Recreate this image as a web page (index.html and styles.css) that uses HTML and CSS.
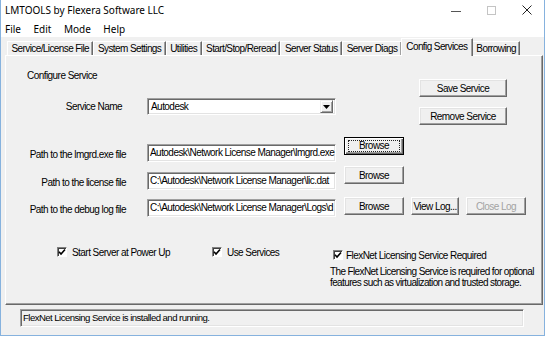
FILE: index.html
```html
<!DOCTYPE html>
<html lang="en">
<head>
    <meta charset="UTF-8">
    <title>LMTOOLS by Flexera Software LLC</title>
    <link rel="stylesheet" href="styles.css">
</head>
<body>
    <div class="window">
        <div class="titlebar">
            <span class="title">LMTOOLS by Flexera Software LLC</span>
            <div class="caption">
                <span class="cap-btn cap-min"></span>
                <span class="cap-btn cap-max"></span>
                <span class="cap-btn cap-close">
                    <svg width="10" height="10" viewBox="0 0 10 10"><path d="M0.5 0.5 L9.5 9.5 M9.5 0.5 L0.5 9.5" stroke="#222" stroke-width="1"/></svg>
                </span>
            </div>
        </div>
        <div class="menubar">
            <span>File</span>
            <span>Edit</span>
            <span>Mode</span>
            <span>Help</span>
        </div>

        <div class="client">
            <div class="tabs">
                <div class="tab">Service/License File</div>
                <div class="tab">System Settings</div>
                <div class="tab">Utilities</div>
                <div class="tab">Start/Stop/Reread</div>
                <div class="tab">Server Status</div>
                <div class="tab">Server Diags</div>
                <div class="tab active">Config Services</div>
                <div class="tab">Borrowing</div>
            </div>

            <div class="panel">
                <div class="config">
                    <div class="config-left">
                        <div class="section-title">Configure Service</div>
                        <div class="service-row">
                            <span class="label label-service">Service Name</span>
                            <div class="select">
                                <span class="select-text">Autodesk</span>
                                <span class="drop">
                                    <svg width="7" height="4" viewBox="0 0 7 4"><path d="M0 0 H7 L3.5 4 Z" fill="#000"/></svg>
                                </span>
                            </div>
                        </div>
                    </div>
                    <div class="config-buttons">
                        <button class="btn btn-wide">Save Service</button>
                        <button class="btn btn-wide">Remove Service</button>
                    </div>
                </div>

                <div class="paths">
                    <div class="path-row row-lmgrd">
                        <div class="path-field">
                            <span class="label">Path to the lmgrd.exe file</span>
                            <div class="textbox">Autodesk\Network License Manager\lmgrd.exe</div>
                        </div>
                        <button class="btn btn-browse focused"><span class="focus-ring">Browse</span></button>
                    </div>
                    <div class="path-row row-license">
                        <div class="path-field">
                            <span class="label">Path to the license file</span>
                            <div class="textbox">C:\Autodesk\Network License Manager\lic.dat</div>
                        </div>
                        <button class="btn btn-browse">Browse</button>
                    </div>
                    <div class="path-row row-debug">
                        <div class="path-field">
                            <span class="label">Path to the debug log file</span>
                            <div class="textbox">C:\Autodesk\Network License Manager\Logs\d</div>
                        </div>
                        <div class="log-buttons">
                            <button class="btn btn-browse">Browse</button>
                            <button class="btn btn-view">View Log...</button>
                            <button class="btn btn-browse" disabled>Close Log</button>
                        </div>
                    </div>
                </div>

                <div class="options">
                    <label class="check">
                        <span class="box"><svg width="8" height="8" viewBox="0 0 8 8"><path d="M1 3.8 L3 6 L7 1.5" fill="none" stroke="#000" stroke-width="1.6"/></svg></span>
                        Start Server at Power Up
                    </label>
                    <label class="check">
                        <span class="box"><svg width="8" height="8" viewBox="0 0 8 8"><path d="M1 3.8 L3 6 L7 1.5" fill="none" stroke="#000" stroke-width="1.6"/></svg></span>
                        Use Services
                    </label>
                    <div class="flexnet">
                        <label class="check check-tight">
                            <span class="box"><svg width="8" height="8" viewBox="0 0 8 8"><path d="M1 3.8 L3 6 L7 1.5" fill="none" stroke="#000" stroke-width="1.6"/></svg></span>
                            FlexNet Licensing Service Required
                        </label>
                        <p class="note">The FlexNet Licensing Service is required for optional<br>features such as virtualization and trusted storage.</p>
                    </div>
                </div>
            </div>

            <div class="status-field">FlexNet Licensing Service is installed and running.</div>
        </div>
    </div>
</body>
</html>
```

FILE: styles.css
```css
body {
    margin: 0;
    padding: 0;
    background: #ffffff;
    font-family: "Liberation Sans", Arial, sans-serif;
}

.window {
    width: 545px;
    height: 336px;
    box-sizing: border-box;
    border: 1px solid #86b2de;
    border-top: none;
    background: #f0f0f0;
    display: flex;
    flex-direction: column;
}

/* title + menu */
.titlebar {
    height: 20px;
    background: #ffffff;
    display: flex;
    align-items: center;
    padding: 0 12px 0 4px;
}

.title,
.menubar span {
    font-family: "Noto Sans", sans-serif;
    font-size: 10px;
    color: #000;
}

.caption {
    margin-left: auto;
    display: flex;
    align-items: center;
    gap: 26px;
}

.cap-btn {
    width: 10px;
    height: 10px;
    display: flex;
    align-items: center;
    justify-content: center;
}

.cap-min::before {
    content: "";
    width: 10px;
    height: 1px;
    background: #555;
    margin-top: 2px;
}

.cap-max {
    box-sizing: border-box;
    border: 1px solid #c4c4c4;
    width: 9px;
    height: 9px;
}

.menubar {
    height: 17px;
    background: #ffffff;
    display: flex;
    align-items: center;
    gap: 12.5px;
    padding-left: 4px;
}

/* client area */
.client {
    flex: 1;
    padding: 1px 1px 0 4px;
    font-size: 10px;
    letter-spacing: -0.55px;
    color: #000;
}

.tabs {
    display: flex;
    align-items: flex-end;
    height: 17px;
    padding-left: 2px;
}

.tab {
    height: 14px;
    box-sizing: border-box;
    padding: 0 3.5px;
    line-height: 14px;
    letter-spacing: -0.6px;
    border-top: 1px solid #ffffff;
    border-left: 1px solid #ffffff;
    border-right: 1px solid #696969;
    box-shadow: inset -1px 0 0 #a0a0a0;
    white-space: nowrap;
}

.tab.active {
    height: 18px;
    line-height: 15px;
    margin: 0 -1px -1px -1px;
    padding: 0 4.5px;
    position: relative;
    z-index: 1;
    background: #f0f0f0;
}

.panel {
    height: 250px;
    box-sizing: border-box;
    border: 1px solid;
    border-color: #ffffff #696969 #696969 #ffffff;
    box-shadow: inset -1px -1px 0 #a0a0a0;
}

/* configure service block */
.config {
    display: flex;
}

.config-left {
    padding: 14px 0 0 21px;
}

.section-title {
    height: 12px;
    line-height: 12px;
}

.service-row {
    display: flex;
    align-items: center;
    margin: 16px 0 0 -21px;
}

.label {
    width: 120px;
    text-align: right;
    white-space: nowrap;
    margin-right: 21px;
}

.label-service {
    width: 116px;
    margin-right: 25px;
}

.select,
.textbox {
    width: 189px;
    box-sizing: border-box;
    background: #ffffff;
    border: 1px solid;
    border-color: #a0a0a0 #ffffff #ffffff #a0a0a0;
    box-shadow: inset 1px 1px 0 #696969, inset -1px -1px 0 #e3e3e3;
}

.select {
    height: 17px;
    display: flex;
    align-items: center;
    padding: 2px;
}

.select-text {
    flex: 1;
    padding-left: 1px;
}

.drop {
    width: 13px;
    height: 13px;
    box-sizing: border-box;
    display: flex;
    align-items: center;
    justify-content: center;
    background: #f0f0f0;
    border: 1px solid;
    border-color: #f0f0f0 #696969 #696969 #f0f0f0;
    box-shadow: inset 1px 1px 0 #ffffff, inset -1px -1px 0 #a0a0a0;
}

.config-buttons {
    margin-left: auto;
    margin-right: 35px;
    padding-top: 23px;
    display: flex;
    flex-direction: column;
    gap: 10px;
}

.btn {
    height: 18px;
    box-sizing: border-box;
    padding: 0;
    font-family: inherit;
    font-size: 10px;
    letter-spacing: -0.55px;
    color: #000;
    background: #f0f0f0;
    border: 1px solid;
    border-color: #ffffff #696969 #696969 #ffffff;
    box-shadow: inset -1px -1px 0 #a0a0a0, inset 1px 1px 0 #e3e3e3;
}

.btn:disabled {
    color: #a3a3a3;
}

.btn-wide {
    width: 88px;
}

.btn-browse {
    width: 60px;
}

.btn-view {
    width: 48px;
}

.btn.focused {
    border-color: #000;
    box-shadow: inset 1px 1px 0 #ffffff, inset -1px -1px 0 #696969, inset -2px -2px 0 #a0a0a0;
    display: flex;
    align-items: center;
}

.focus-ring {
    flex: 1;
    margin: 0 3px;
    height: 10px;
    line-height: 10px;
    border: 1px dotted #222;
}

/* path rows */
.paths {
    margin-top: 12px;
}

.path-row {
    display: flex;
    align-items: flex-start;
}

.path-field {
    display: flex;
    align-items: center;
}

.path-field .label {
    padding-top: 3px;
}

.textbox {
    height: 18px;
    line-height: 16px;
    padding: 0 2px;
    white-space: nowrap;
    overflow: hidden;
}

.path-row .btn,
.log-buttons {
    margin-left: 8px;
}

.log-buttons {
    display: flex;
    gap: 7px;
}

.log-buttons .btn {
    margin-left: 0;
}

.row-lmgrd .path-field {
    margin-top: 7px;
}

.row-license {
    margin-top: 4px;
}

.row-license .path-field {
    margin-top: 6px;
}

.row-debug {
    margin-top: 7px;
}

.row-debug .path-field {
    margin-top: 2px;
}

/* checkboxes */
.options {
    margin-top: 30px;
    padding-left: 51px;
    display: grid;
    grid-template-columns: 155px 121px auto;
    align-items: start;
}

.check {
    display: flex;
    align-items: center;
    gap: 5px;
    height: 10px;
}

.check-tight {
    gap: 3px;
    margin-top: 3px;
}

.box {
    width: 10px;
    height: 10px;
    box-sizing: border-box;
    background: #ffffff;
    border: 1px solid;
    border-color: #808080 #ffffff #ffffff #808080;
    box-shadow: inset 1px 1px 0 #404040;
    display: flex;
    align-items: center;
    justify-content: center;
}

.note {
    margin: 6px 0 0 -3px;
    line-height: 11px;
    letter-spacing: -0.62px;
    white-space: nowrap;
}

/* status bar */
.status-field {
    margin: 4px 0 0 15px;
    width: 504px;
    height: 18px;
    box-sizing: border-box;
    padding-left: 2px;
    line-height: 16px;
    font-size: 9.6px;
    border: 1px solid;
    border-color: #a0a0a0 #ffffff #ffffff #a0a0a0;
    box-shadow: inset 1px 1px 0 #696969, inset -1px -1px 0 #e3e3e3;
}
```
